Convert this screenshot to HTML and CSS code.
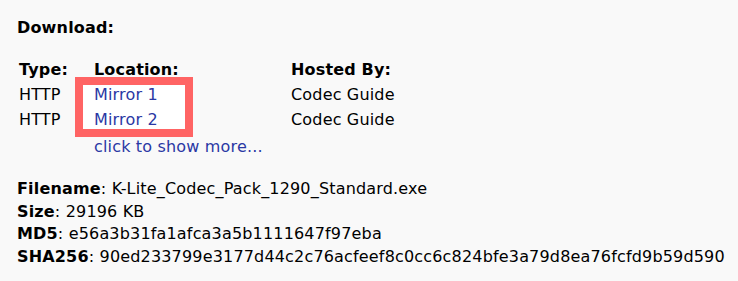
FILE: index.html
```html
<!DOCTYPE html>
<html>
<head>
<meta charset="utf-8">
<link rel="stylesheet" href="styles.css">
</head>
<body>
<div class="page">
  <div class="heading">Download:</div>
  <div class="dl">
    <div class="col type">
      <div class="th">Type:</div>
      <div class="td">HTTP</div>
      <div class="td">HTTP</div>
    </div>
    <div class="col loc">
      <div class="th">Location:</div>
      <div class="box">
        <a class="td link first" href="#">Mirror 1</a>
        <a class="td link" href="#">Mirror 2</a>
      </div>
      <a class="more link" href="#">click to show more...</a>
    </div>
    <div class="col host">
      <div class="th">Hosted By:</div>
      <div class="td">Codec Guide</div>
      <div class="td">Codec Guide</div>
    </div>
  </div>
  <div class="info">
    <div><b>Filename</b>: K-Lite_Codec_Pack_1290_Standard.exe</div>
    <div><b>Size</b>: 29196 KB</div>
    <div><b>MD5</b>: e56a3b31fa1afca3a5b1111647f97eba</div>
    <div><b>SHA256</b>: 90ed233799e3177d44c2c76acfeef8c0cc6c824bfe3a79d8ea76fcfd9b59d590</div>
  </div>
</div>
</body>
</html>
```
FILE: styles.css
```css
html, body {
  margin: 0;
  padding: 0;
  background: #f9f9f9;
}
body {
  font-family: "DejaVu Sans", Verdana, sans-serif;
  font-size: 16px;
  letter-spacing: 0.17px;
  color: #000;
}
.page {
  padding: 18px 0 0 17px;
}
.heading {
  font-weight: bold;
  line-height: 20px;
}
.dl {
  display: flex;
  margin-top: 19px;
}
.col {
  display: flex;
  flex-direction: column;
}
.th {
  font-weight: bold;
  line-height: 25px;
}
.td {
  line-height: 25px;
}
.type { width: 75px; padding-left: 2px; }
.loc { width: 197px; }
.link {
  color: #2a38a4;
  text-decoration: none;
}
.box {
  display: flex;
  flex-direction: column;
  margin-left: -19px;
  margin-top: -5px;
  width: 91px;
  height: 44px;
  padding-left: 11px;
  border: 8px solid #ff6464;
  background: #fff;
}
.box .first {
  margin-top: -3px;
}
.more {
  line-height: 25px;
  margin-top: -3px;
}
.info {
  margin-top: 19px;
  line-height: 22.7px;
}
```
